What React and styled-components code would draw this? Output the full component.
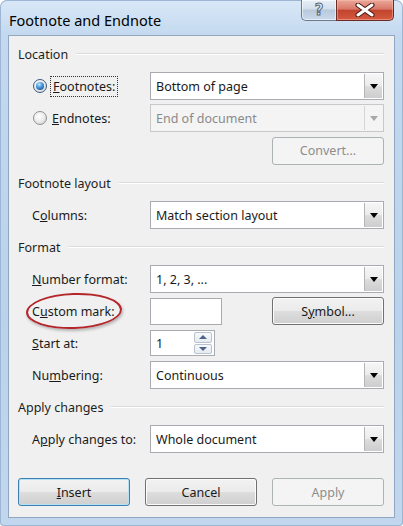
import React from "react";
import styled, { createGlobalStyle } from "styled-components";

const GlobalStyle = createGlobalStyle`
  html, body {
    margin: 0;
    padding: 0;
    background: #ffffff;
  }
  body {
    font-family: "Noto Sans", "Open Sans", sans-serif;
    font-size: 12.5px;
    color: #1a1a1a;
  }
`;

const Window = styled.div`
  width: 403px;
  height: 526px;
  box-sizing: border-box;
  display: flex;
  flex-direction: column;
  padding: 0 8px 8px;
  background: linear-gradient(180deg, #d9e8f7 0px, #c4d9f0 34px, #bad2eb 60%, #c2d7ee 100%);
  border-radius: 7px 7px 4px 4px;
  box-shadow: inset 0 0 0 1px #9cb6d3;
`;

const TitleBar = styled.div`
  height: 35px;
  display: flex;
  align-items: flex-start;
`;

const Title = styled.div`
  padding: 10px 0 0 1px;
  font-size: 14.5px;
  line-height: 20px;
  color: #000;
`;

const Captions = styled.div`
  margin-left: auto;
  margin-right: 1px;
  display: flex;
`;

const HelpButton = styled.div`
  width: 35px;
  height: 21px;
  box-sizing: border-box;
  border: 1px solid #6c7a8c;
  border-top: none;
  border-right: none;
  border-radius: 0 0 0 5px;
  background: linear-gradient(180deg, #e8eff7 0%, #d3dfec 45%, #b7c9dc 50%, #cbdaea 100%);
  box-shadow: inset 0 0 0 1px rgba(255, 255, 255, 0.55);
  display: flex;
  align-items: center;
  justify-content: center;
  font-family: "DejaVu Sans", sans-serif;
  font-weight: bold;
  font-size: 15px;
  color: #eef1f4;
  -webkit-text-stroke: 1px #5a6676;
`;

const CloseButton = styled.div`
  width: 58px;
  height: 21px;
  box-sizing: border-box;
  border: 1px solid #6a2b22;
  border-top: none;
  border-radius: 0 0 5px 0;
  background: linear-gradient(180deg, #eaa898 0%, #d9786a 45%, #c2442e 52%, #d45a40 100%);
  box-shadow: inset 0 0 0 1px rgba(255, 200, 190, 0.45);
  display: flex;
  align-items: center;
  justify-content: center;
`;

const Panel = styled.div`
  flex: 1;
  display: flex;
  flex-direction: column;
  background: #f0f0f0;
  border: 1px solid #8fa7c1;
  padding: 2px 10px 0 9px;
`;

const Heading = styled.div`
  height: 32px;
  display: flex;
  align-items: center;
  color: #1e1e1e;
`;

const Rule = styled.div`
  flex: 1;
  margin-left: 8px;
  border-top: 1px solid #dcdcdc;
  border-bottom: 1px solid #ffffff;
`;

const Row = styled.div`
  position: relative;
  height: ${(p) => p.$h || 32}px;
  display: flex;
  align-items: center;
  justify-content: ${(p) => (p.$end ? "flex-end" : "flex-start")};
  padding-left: ${(p) => (p.$end ? 0 : 14)}px;
`;

const Label = styled.div`
  width: 118px;
  flex-shrink: 0;
  display: flex;
  align-items: center;
  color: #1a1a1a;
`;

const Focus = styled.span`
  outline: 1px dotted #333;
  outline-offset: 1px;
  padding: 0 1px;
`;

const Radio = styled.span`
  width: 14px;
  height: 14px;
  margin: 0 5px 0 1px;
  border-radius: 50%;
  border: 1px solid ${(p) => (p.$checked ? "#3a5a82" : "#8e8f8f")};
  background: radial-gradient(circle at 40% 35%, #ffffff 0%, #ececec 50%, #c9c9c9 100%);
  box-sizing: border-box;
  display: flex;
  align-items: center;
  justify-content: center;
  flex-shrink: 0;
  &::after {
    content: "";
    display: ${(p) => (p.$checked ? "block" : "none")};
    width: 8px;
    height: 8px;
    border-radius: 50%;
    background: radial-gradient(circle at 40% 30%, #c4e8ff 0%, #4a9be0 40%, #0b3a78 100%);
  }
`;

const Select = styled.div`
  position: relative;
  flex: 1;
  height: 28px;
  box-sizing: border-box;
  border: 1px solid ${(p) => (p.$disabled ? "#c8c8c8" : "#a9abb0")};
  background: ${(p) => (p.$disabled ? "#f4f4f4" : "#ffffff")};
  color: ${(p) => (p.$disabled ? "#8a8a8a" : "#1a1a1a")};
  display: flex;
  align-items: center;
  padding-left: 5px;
`;

const Drop = styled.div`
  position: absolute;
  top: 1px;
  right: 1px;
  bottom: 1px;
  width: 18px;
  box-sizing: border-box;
  border-left: 1px solid ${(p) => (p.$disabled ? "#d6d6d6" : "#b5b5b5")};
  background: ${(p) =>
    p.$disabled
      ? "#f4f4f4"
      : "linear-gradient(180deg, #f6f6f6 0%, #ebebeb 48%, #dcdcdc 52%, #cdcdcd 100%)"};
  display: flex;
  align-items: center;
  justify-content: center;
  &::after {
    content: "";
    border-left: 4.5px solid transparent;
    border-right: 4.5px solid transparent;
    border-top: 5px solid ${(p) => (p.$disabled ? "#a8a8a8" : "#000")};
  }
`;

const TextBox = styled.div`
  width: ${(p) => p.$w}px;
  height: ${(p) => p.$h || 27}px;
  box-sizing: border-box;
  border: 1px solid #a9abb0;
  background: #fff;
  display: flex;
  align-items: center;
  padding-left: 5px;
  position: relative;
`;

const Spin = styled.div`
  position: absolute;
  top: 1px;
  right: 2px;
  bottom: 1px;
  width: 18px;
  display: flex;
  flex-direction: column;
  gap: 1px;
`;

const SpinBtn = styled.div`
  flex: 1;
  border: 1px solid #b9c3cf;
  border-radius: 2px;
  background: linear-gradient(180deg, #f7f9fb 0%, #e6ebf1 100%);
  display: flex;
  align-items: center;
  justify-content: center;
  &::after {
    content: "";
    border-left: 4px solid transparent;
    border-right: 4px solid transparent;
    ${(p) => (p.$up ? "border-bottom" : "border-top")}: 4px solid #4c6488;
  }
`;

const Button = styled.div`
  width: ${(p) => (p.$w ? `${p.$w}px` : "auto")};
  height: 28px;
  box-sizing: border-box;
  border-radius: 3px;
  display: flex;
  align-items: center;
  justify-content: center;
  border: 1px solid ${(p) => (p.$disabled ? "#adb2b5" : p.$default ? "#3c7fb1" : "#707070")};
  color: ${(p) => (p.$disabled ? "#8d8d8d" : "#1a1a1a")};
  background: ${(p) =>
    p.$disabled
      ? "#f4f4f4"
      : "linear-gradient(180deg, #f2f2f2 0%, #ebebeb 48%, #dddddd 52%, #cfcfcf 100%)"};
  box-shadow: ${(p) =>
    p.$default ? "inset 0 0 0 1px #b8e0f5" : p.$disabled ? "none" : "inset 0 0 0 1px #fcfcfc"};
`;

const Footer = styled.div`
  margin-top: auto;
  margin-bottom: 11px;
  display: grid;
  grid-template-columns: repeat(3, 1fr);
  gap: 15px;
`;

const Ellipse = styled.div`
  position: absolute;
  left: 8px;
  top: -2px;
  width: 96px;
  height: 36px;
  box-sizing: border-box;
  border: 2px solid #b4262a;
  border-radius: 50%;
  box-shadow: 1px 2px 3px rgba(0, 0, 0, 0.25);
  transform: rotate(-2deg);
  pointer-events: none;
`;

const Spacer = styled.div`
  flex: 1;
`;

const Key = ({ children }) => <u>{children}</u>;

const Dropdown = ({ value, disabled }) => (
  <Select $disabled={disabled}>
    {value}
    <Drop $disabled={disabled} />
  </Select>
);

export default function App() {
  return (
    <>
      <GlobalStyle />
      <Window>
        <TitleBar>
          <Title>Footnote and Endnote</Title>
          <Captions>
            <HelpButton>?</HelpButton>
            <CloseButton>
              <svg width="22" height="14" viewBox="0 0 22 14">
                <path d="M4 2 L18 12 M18 2 L4 12" stroke="#4a1a14" strokeWidth="5" strokeLinecap="round" />
                <path d="M4 2 L18 12 M18 2 L4 12" stroke="#ffffff" strokeWidth="3" strokeLinecap="round" />
              </svg>
            </CloseButton>
          </Captions>
        </TitleBar>
        <Panel>
          <Heading>
            Location
            <Rule />
          </Heading>
          <Row>
            <Label>
              <Radio $checked />
              <Focus>
                <Key>F</Key>ootnotes:
              </Focus>
            </Label>
            <Dropdown value="Bottom of page" />
          </Row>
          <Row>
            <Label>
              <Radio />
              <span>
                <Key>E</Key>ndnotes:
              </span>
            </Label>
            <Dropdown value="End of document" disabled />
          </Row>
          <Row $h={33} $end>
            <Button $w={112} $disabled>
              Convert...
            </Button>
          </Row>
          <Heading>
            Footnote layout
            <Rule />
          </Heading>
          <Row>
            <Label>
              <span>
                C<Key>o</Key>lumns:
              </span>
            </Label>
            <Dropdown value="Match section layout" />
          </Row>
          <Heading>
            Format
            <Rule />
          </Heading>
          <Row>
            <Label>
              <span>
                <Key>N</Key>umber format:
              </span>
            </Label>
            <Dropdown value="1, 2, 3, ..." />
          </Row>
          <Row>
            <Ellipse />
            <Label>
              <span>
                C<Key>u</Key>stom mark:
              </span>
            </Label>
            <TextBox $w={72} />
            <Spacer />
            <Button $w={112}>
              <span>
                S<Key>y</Key>mbol...
              </span>
            </Button>
          </Row>
          <Row>
            <Label>
              <span>
                <Key>S</Key>tart at:
              </span>
            </Label>
            <TextBox $w={65} $h={26}>
              1
              <Spin>
                <SpinBtn $up />
                <SpinBtn />
              </Spin>
            </TextBox>
          </Row>
          <Row>
            <Label>
              <span>
                Nu<Key>m</Key>bering:
              </span>
            </Label>
            <Dropdown value="Continuous" />
          </Row>
          <Heading>
            Apply changes
            <Rule />
          </Heading>
          <Row>
            <Label>
              <span>
                A<Key>p</Key>ply changes to:
              </span>
            </Label>
            <Dropdown value="Whole document" />
          </Row>
          <Footer>
            <Button $default>
              <span>
                <Key>I</Key>nsert
              </span>
            </Button>
            <Button>Cancel</Button>
            <Button $disabled>Apply</Button>
          </Footer>
        </Panel>
      </Window>
    </>
  );
}
